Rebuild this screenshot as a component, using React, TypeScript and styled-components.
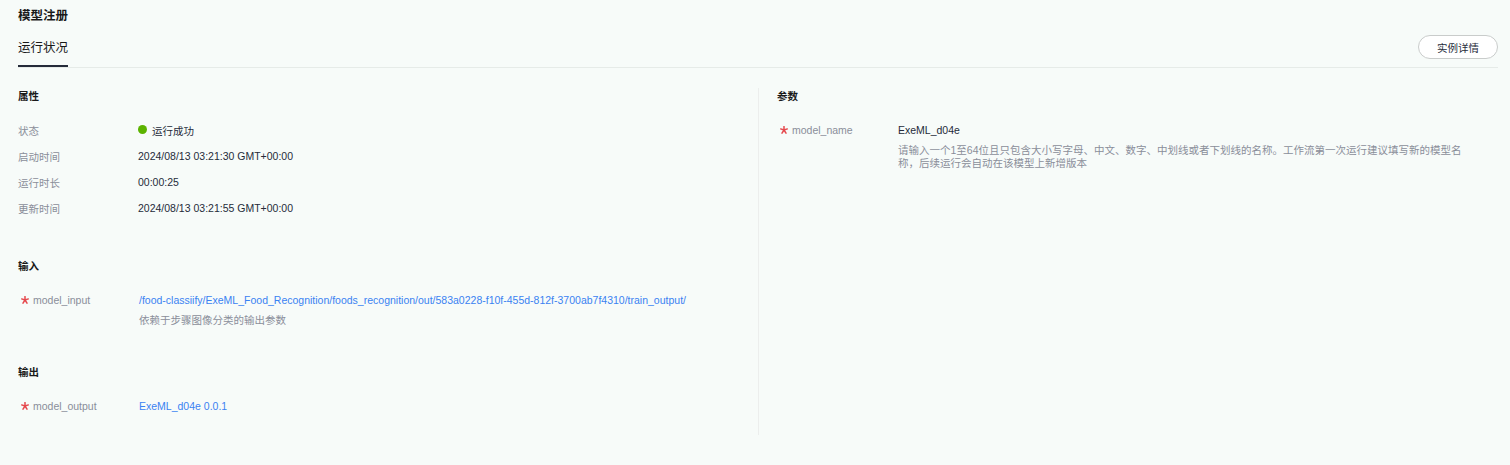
import React from 'react';
import styled, { createGlobalStyle } from 'styled-components';

const GlobalStyle = createGlobalStyle`
    body{
        margin:0;
        background:#f7fbf9;
        font-family:"Liberation Sans","Noto Sans CJK SC",sans-serif;
        color:#252b3a;
    }
`;

const Page = styled.div`
    padding:0 12px 0 18px;
`;

const Title = styled.div`
    margin-top:8px;
    font-size:12.5px;
    line-height:16px;
    font-weight:700;
    color:#191919;
`;

const TabBar = styled.div`
    display:flex;
    justify-content:space-between;
    align-items:flex-start;
    border-bottom:1px solid #e6ebe8;
`;

const Tab = styled.div`
    padding-top:14px;
    padding-bottom:7px;
    line-height:20px;
    font-size:12.5px;
    color:#191919;
    border-bottom:2px solid #252b3a;
`;

const Button = styled.button`
    margin-top:11px;
    width:80px;
    height:24px;
    border:1px solid #c9cccb;
    border-radius:12px;
    background:#fff;
    font-family:inherit;
    font-size:10.5px;
    color:#252b3a;
    cursor:pointer;
`;

const Columns = styled.div`
    display:grid;
    grid-template-columns:741px 1fr;
    margin-top:20px;
`;

const Column = styled.div<{ $left?: boolean }>`
    padding-bottom:19px;
    ${p => p.$left ? 'border-right:1px solid #eceeed;' : 'padding-left:18px;'}
`;

const Section = styled.div`
    & + &{
        margin-top:37px;
    }
`;

const Heading = styled.div`
    font-size:10.5px;
    line-height:16px;
    font-weight:700;
    color:#191919;
`;

const AttrList = styled.div`
    margin-top:13px;
`;

const AttrRow = styled.div`
    display:flex;
    height:26px;
    align-items:center;
    font-size:10.5px;
`;

const Label = styled.div`
    width:120px;
    flex-shrink:0;
    color:#8a8e99;
`;

const Value = styled.div`
    display:flex;
    align-items:center;
    color:#252b3a;
`;

const Dot = styled.span`
    width:9px;
    height:9px;
    border-radius:50%;
    background:#5cb300;
    margin-right:5px;
    margin-top:-2px;
`;

const ParamRow = styled.div`
    display:flex;
    margin-top:16px;
    font-size:10.5px;
`;

const ParamLabel = styled.div`
    width:121px;
    flex-shrink:0;
    display:flex;
    align-items:center;
    align-self:flex-start;
    height:20px;
    color:#8a8e99;
`;

const StarIcon = styled.svg`
    width:8px;
    height:8px;
    margin-left:3px;
    margin-right:4px;
    flex-shrink:0;
`;

const Star = () => (
    <StarIcon viewBox="0 0 8 8">
        <g stroke="#e5484d" strokeWidth="1.5" strokeLinecap="round">
            <line x1="4" y1="4" x2="4" y2="0.6" />
            <line x1="4" y1="4" x2="7.3" y2="2.9" />
            <line x1="4" y1="4" x2="6" y2="7.2" />
            <line x1="4" y1="4" x2="2" y2="7.2" />
            <line x1="4" y1="4" x2="0.7" y2="2.9" />
        </g>
    </StarIcon>
);

const ParamBody = styled.div`
    max-width:575px;
`;

const ParamValue = styled.div<{ $link?: boolean }>`
    line-height:20px;
    color:${p => p.$link ? '#3a82f2' : '#252b3a'};
`;

const Desc = styled.div`
    margin-top:4px;
    line-height:13px;
    color:#8a8e99;
`;

type Param = { name: string; value: string; link?: boolean; desc?: string };

const ParamItem = ({ name, value, link, desc }: Param) => (
    <ParamRow>
        <ParamLabel><Star />{name}</ParamLabel>
        <ParamBody>
            <ParamValue $link={link}>{value}</ParamValue>
            {desc && <Desc>{desc}</Desc>}
        </ParamBody>
    </ParamRow>
);

const attrs = [
    { label: '启动时间', value: '2024/08/13 03:21:30 GMT+00:00' },
    { label: '运行时长', value: '00:00:25' },
    { label: '更新时间', value: '2024/08/13 03:21:55 GMT+00:00' },
];

const App = () => {
    return (
        <>
            <GlobalStyle />
            <Page>
                <Title>模型注册</Title>
                <TabBar>
                    <Tab>运行状况</Tab>
                    <Button>实例详情</Button>
                </TabBar>
                <Columns>
                    <Column $left>
                        <Section>
                            <Heading>属性</Heading>
                            <AttrList>
                                <AttrRow>
                                    <Label>状态</Label>
                                    <Value><Dot />运行成功</Value>
                                </AttrRow>
                                {attrs.map(a => (
                                    <AttrRow key={a.label}>
                                        <Label>{a.label}</Label>
                                        <Value>{a.value}</Value>
                                    </AttrRow>
                                ))}
                            </AttrList>
                        </Section>
                        <Section>
                            <Heading>输入</Heading>
                            <ParamItem
                                name="model_input"
                                link
                                value="/food-classiify/ExeML_Food_Recognition/foods_recognition/out/583a0228-f10f-455d-812f-3700ab7f4310/train_output/"
                                desc="依赖于步骤图像分类的输出参数"
                            />
                        </Section>
                        <Section>
                            <Heading>输出</Heading>
                            <ParamItem name="model_output" link value="ExeML_d04e 0.0.1" />
                        </Section>
                    </Column>
                    <Column>
                        <Section>
                            <Heading>参数</Heading>
                            <ParamItem
                                name="model_name"
                                value="ExeML_d04e"
                                desc="请输入一个1至64位且只包含大小写字母、中文、数字、中划线或者下划线的名称。工作流第一次运行建议填写新的模型名称，后续运行会自动在该模型上新增版本"
                            />
                        </Section>
                    </Column>
                </Columns>
            </Page>
        </>
    );
};

export default App;
